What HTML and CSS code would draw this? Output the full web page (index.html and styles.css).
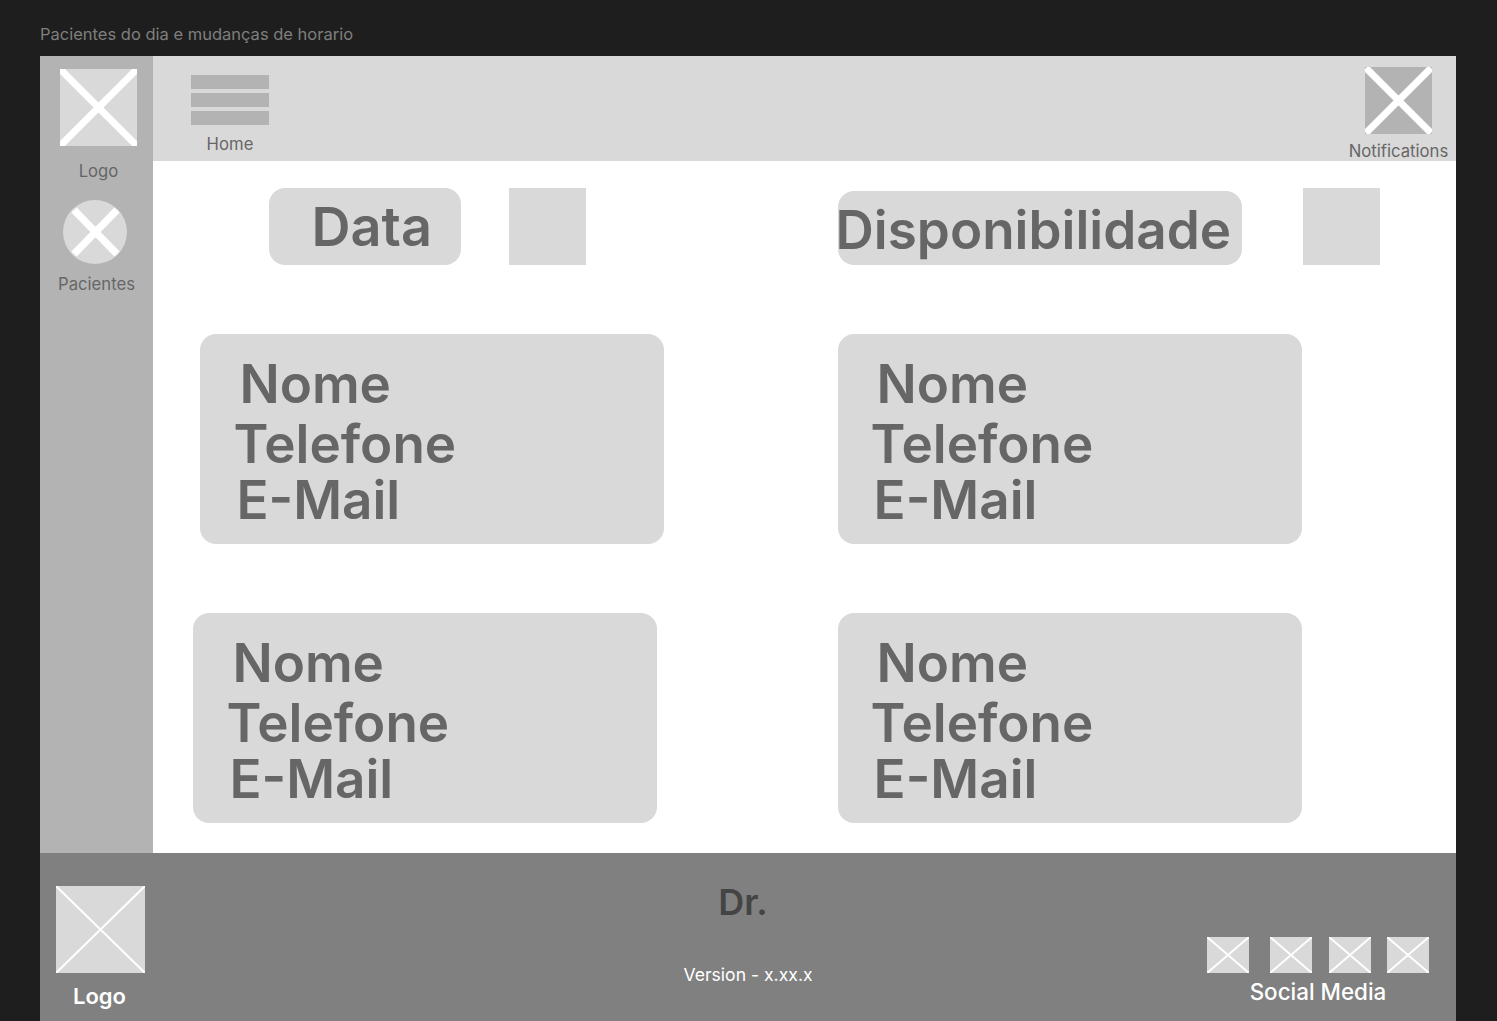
FILE: index.html
```html
<!DOCTYPE html>
<html lang="en">
<head>
    <meta charset="UTF-8">
    <meta name="viewport" content="width=device-width, initial-scale=1.0">
    <title>Pacientes do dia</title>
    <link rel="stylesheet" href="styles.css">
</head>
<body>
    <div class="frame-title">Pacientes do dia e mudanças de horario</div>
    <div class="frame">
        <div class="middle">
            <aside class="sidebar">
                <svg class="side-logo" viewBox="0 0 77 77"><rect width="77" height="77" fill="#d9d9d9"/><path d="M0 0L77 77M77 0L0 77" stroke="#fff" stroke-width="7"/></svg>
                <div class="side-label logo-label">Logo</div>
                <svg class="side-circle" viewBox="0 0 64 64"><circle cx="32" cy="32" r="32" fill="#d9d9d9"/><path d="M11 10L54 54M54 10L11 54" stroke="#fff" stroke-width="7.5"/></svg>
                <div class="side-label pacientes-label">Pacientes</div>
            </aside>
            <div class="main">
                <header class="topbar">
                    <div class="home">
                        <div class="menu-icon"><span></span><span></span><span></span></div>
                        <div class="top-label">Home</div>
                    </div>
                    <div class="notifications">
                        <svg class="notif-icon" viewBox="0 0 67 67"><rect width="67" height="67" fill="#b3b3b3"/><path d="M1 1L66 66M66 1L1 66" stroke="#fff" stroke-width="7"/></svg>
                        <div class="top-label">Notifications</div>
                    </div>
                </header>
                <div class="content">
                    <div class="row filters">
                        <div class="filter filter-left">
                            <div class="pill pill-data">Data</div>
                            <div class="square"></div>
                        </div>
                        <div class="filter filter-right">
                            <div class="pill pill-disp">Disponibilidade</div>
                            <div class="square"></div>
                        </div>
                    </div>
                    <div class="row cards first">
                        <div class="card card-a">
                            <div class="line nome">Nome</div>
                            <div class="line telefone">Telefone</div>
                            <div class="line email">E-Mail</div>
                        </div>
                        <div class="card">
                            <div class="line nome">Nome</div>
                            <div class="line telefone">Telefone</div>
                            <div class="line email">E-Mail</div>
                        </div>
                    </div>
                    <div class="row cards second">
                        <div class="card card-b">
                            <div class="line nome">Nome</div>
                            <div class="line telefone">Telefone</div>
                            <div class="line email">E-Mail</div>
                        </div>
                        <div class="card">
                            <div class="line nome">Nome</div>
                            <div class="line telefone">Telefone</div>
                            <div class="line email">E-Mail</div>
                        </div>
                    </div>
                </div>
            </div>
        </div>
        <footer class="footer">
            <div class="foot-logo">
                <svg class="foot-logo-icon" viewBox="0 0 89 87"><rect width="89" height="87" fill="#d9d9d9"/><path d="M0 0L89 87M89 0L0 87" stroke="#fff" stroke-width="2"/></svg>
                <div class="foot-logo-label">Logo</div>
            </div>
            <div class="foot-center">
                <div class="doctor">Dr.</div>
                <div class="version">Version - x.xx.x</div>
            </div>
            <div class="social">
                <div class="social-icons">
                    <svg class="social-icon" viewBox="0 0 42 36"><rect width="42" height="36" fill="#d9d9d9"/><path d="M0 0L42 36M42 0L0 36" stroke="#fff" stroke-width="2"/></svg>
                    <svg class="social-icon gap-a" viewBox="0 0 42 36"><rect width="42" height="36" fill="#d9d9d9"/><path d="M0 0L42 36M42 0L0 36" stroke="#fff" stroke-width="2"/></svg>
                    <svg class="social-icon gap-b" viewBox="0 0 42 36"><rect width="42" height="36" fill="#d9d9d9"/><path d="M0 0L42 36M42 0L0 36" stroke="#fff" stroke-width="2"/></svg>
                    <svg class="social-icon gap-c" viewBox="0 0 42 36"><rect width="42" height="36" fill="#d9d9d9"/><path d="M0 0L42 36M42 0L0 36" stroke="#fff" stroke-width="2"/></svg>
                </div>
                <div class="social-label">Social Media</div>
            </div>
        </footer>
    </div>
</body>
</html>
```

FILE: styles.css
```css
html, body {
    margin: 0;
    height: 1021px;
    overflow: hidden;
}
body {
    background: #1e1e1e;
    font-family: 'Inter', 'Liberation Sans', sans-serif;
    padding: 0 41px 0 40px;
    box-sizing: border-box;
}
.frame-title {
    height: 56px;
    box-sizing: border-box;
    padding-top: 24px;
    font-size: 16.5px;
    line-height: 20px;
    color: #7f7f7f;
}
.frame {
    height: 965px;
    display: flex;
    flex-direction: column;
}
.middle {
    display: flex;
    height: 797px;
}
.sidebar {
    width: 113px;
    background: #b3b3b3;
    display: flex;
    flex-direction: column;
    flex-shrink: 0;
}
.side-logo {
    display: block;
    width: 77px;
    height: 77px;
    margin: 13px 0 0 20px;
}
.side-label {
    font-size: 16.7px;
    line-height: 20px;
    color: #666;
    text-align: center;
}
.logo-label {
    margin: 15px 0 0 2px;
    width: 113px;
}
.side-circle {
    display: block;
    width: 64px;
    height: 64px;
    margin: 19px 0 0 23px;
}
.pacientes-label {
    margin-top: 10px;
    width: 113px;
}
.main {
    flex: 1;
    background: #fff;
    display: flex;
    flex-direction: column;
}
.topbar {
    height: 105px;
    background: #d9d9d9;
    display: flex;
    justify-content: space-between;
}
.home {
    width: 78px;
    margin-left: 38px;
    padding-top: 19px;
}
.menu-icon {
    display: flex;
    flex-direction: column;
    gap: 4px;
}
.menu-icon span {
    height: 14px;
    background: #b3b3b3;
}
.top-label {
    font-size: 16.7px;
    line-height: 20px;
    color: #666;
    text-align: center;
    margin-top: 9px;
}
.notifications {
    display: flex;
    flex-direction: column;
    align-items: center;
    width: 99px;
    margin-right: 8px;
    padding-top: 11px;
}
.notif-icon {
    display: block;
    width: 67px;
    height: 67px;
}
.notifications .top-label {
    margin-top: 7px;
    white-space: nowrap;
}
.content {
    flex: 1;
}
.row {
    display: grid;
    grid-template-columns: 684.6px 1fr;
}
.filters {
    padding-top: 27px;
}
.filter {
    display: flex;
    align-items: flex-end;
}
.filter-left {
    padding-left: 115.6px;
    gap: 48px;
}
.filter-right {
    gap: 61px;
}
.square {
    width: 77px;
    height: 77px;
    background: #d9d9d9;
}
.pill {
    background: #d9d9d9;
    border-radius: 16px;
    color: #666;
    font-weight: 600;
    display: flex;
    align-items: center;
    white-space: nowrap;
}
.pill-data {
    width: 192px;
    height: 77px;
    padding-left: 43px;
    box-sizing: border-box;
    font-size: 54px;
}
.pill-disp {
    width: 404px;
    height: 74px;
    padding-top: 3px;
    box-sizing: border-box;
    font-size: 53px;
    text-indent: -2px;
}
.cards {
    height: 210px;
}
.first {
    margin-top: 69px;
}
.second {
    margin-top: 69px;
}
.card {
    width: 464px;
    height: 210px;
    background: #d9d9d9;
    border-radius: 16px;
    color: #666;
    font-weight: 600;
    font-size: 53px;
    padding-top: 20px;
    box-sizing: border-box;
}
.card-a {
    margin-left: 47.4px;
}
.card-b {
    margin-left: 40.4px;
}
.line {
    line-height: 60px;
}
.nome {
    padding-left: 39px;
}
.telefone {
    padding-left: 33px;
}
.email {
    padding-left: 36px;
    line-height: 53px;
}
.footer {
    flex: 1;
    background: #808080;
    display: flex;
}
.foot-logo {
    width: 89px;
    margin-left: 16px;
    padding-top: 33px;
}
.foot-logo-icon {
    display: block;
    width: 89px;
    height: 87px;
}
.foot-logo-label {
    margin-top: 9px;
    font-size: 22px;
    line-height: 28px;
    font-weight: 600;
    color: #fff;
    text-align: center;
    margin-left: -2px;
}
.foot-center {
    width: 300px;
    margin-left: 453px;
    text-align: center;
}
.doctor {
    margin-top: 27px;
    font-size: 36px;
    line-height: 44px;
    font-weight: 600;
    color: #444;
    margin-left: -10px;
}
.version {
    margin-top: 40px;
    font-size: 17.6px;
    line-height: 22px;
    color: #fff;
}
.social {
    margin-left: auto;
    margin-right: 27px;
    padding-top: 84px;
    width: 222px;
}
.social-icons {
    display: flex;
}
.social-icon {
    display: block;
    width: 42px;
    height: 36px;
}
.gap-a {
    margin-left: 21px;
}
.gap-b {
    margin-left: 17px;
}
.gap-c {
    margin-left: 16px;
}
.social-label {
    margin-top: 5px;
    font-size: 22.4px;
    line-height: 28px;
    font-weight: 500;
    color: #fff;
    text-align: center;
}
```
